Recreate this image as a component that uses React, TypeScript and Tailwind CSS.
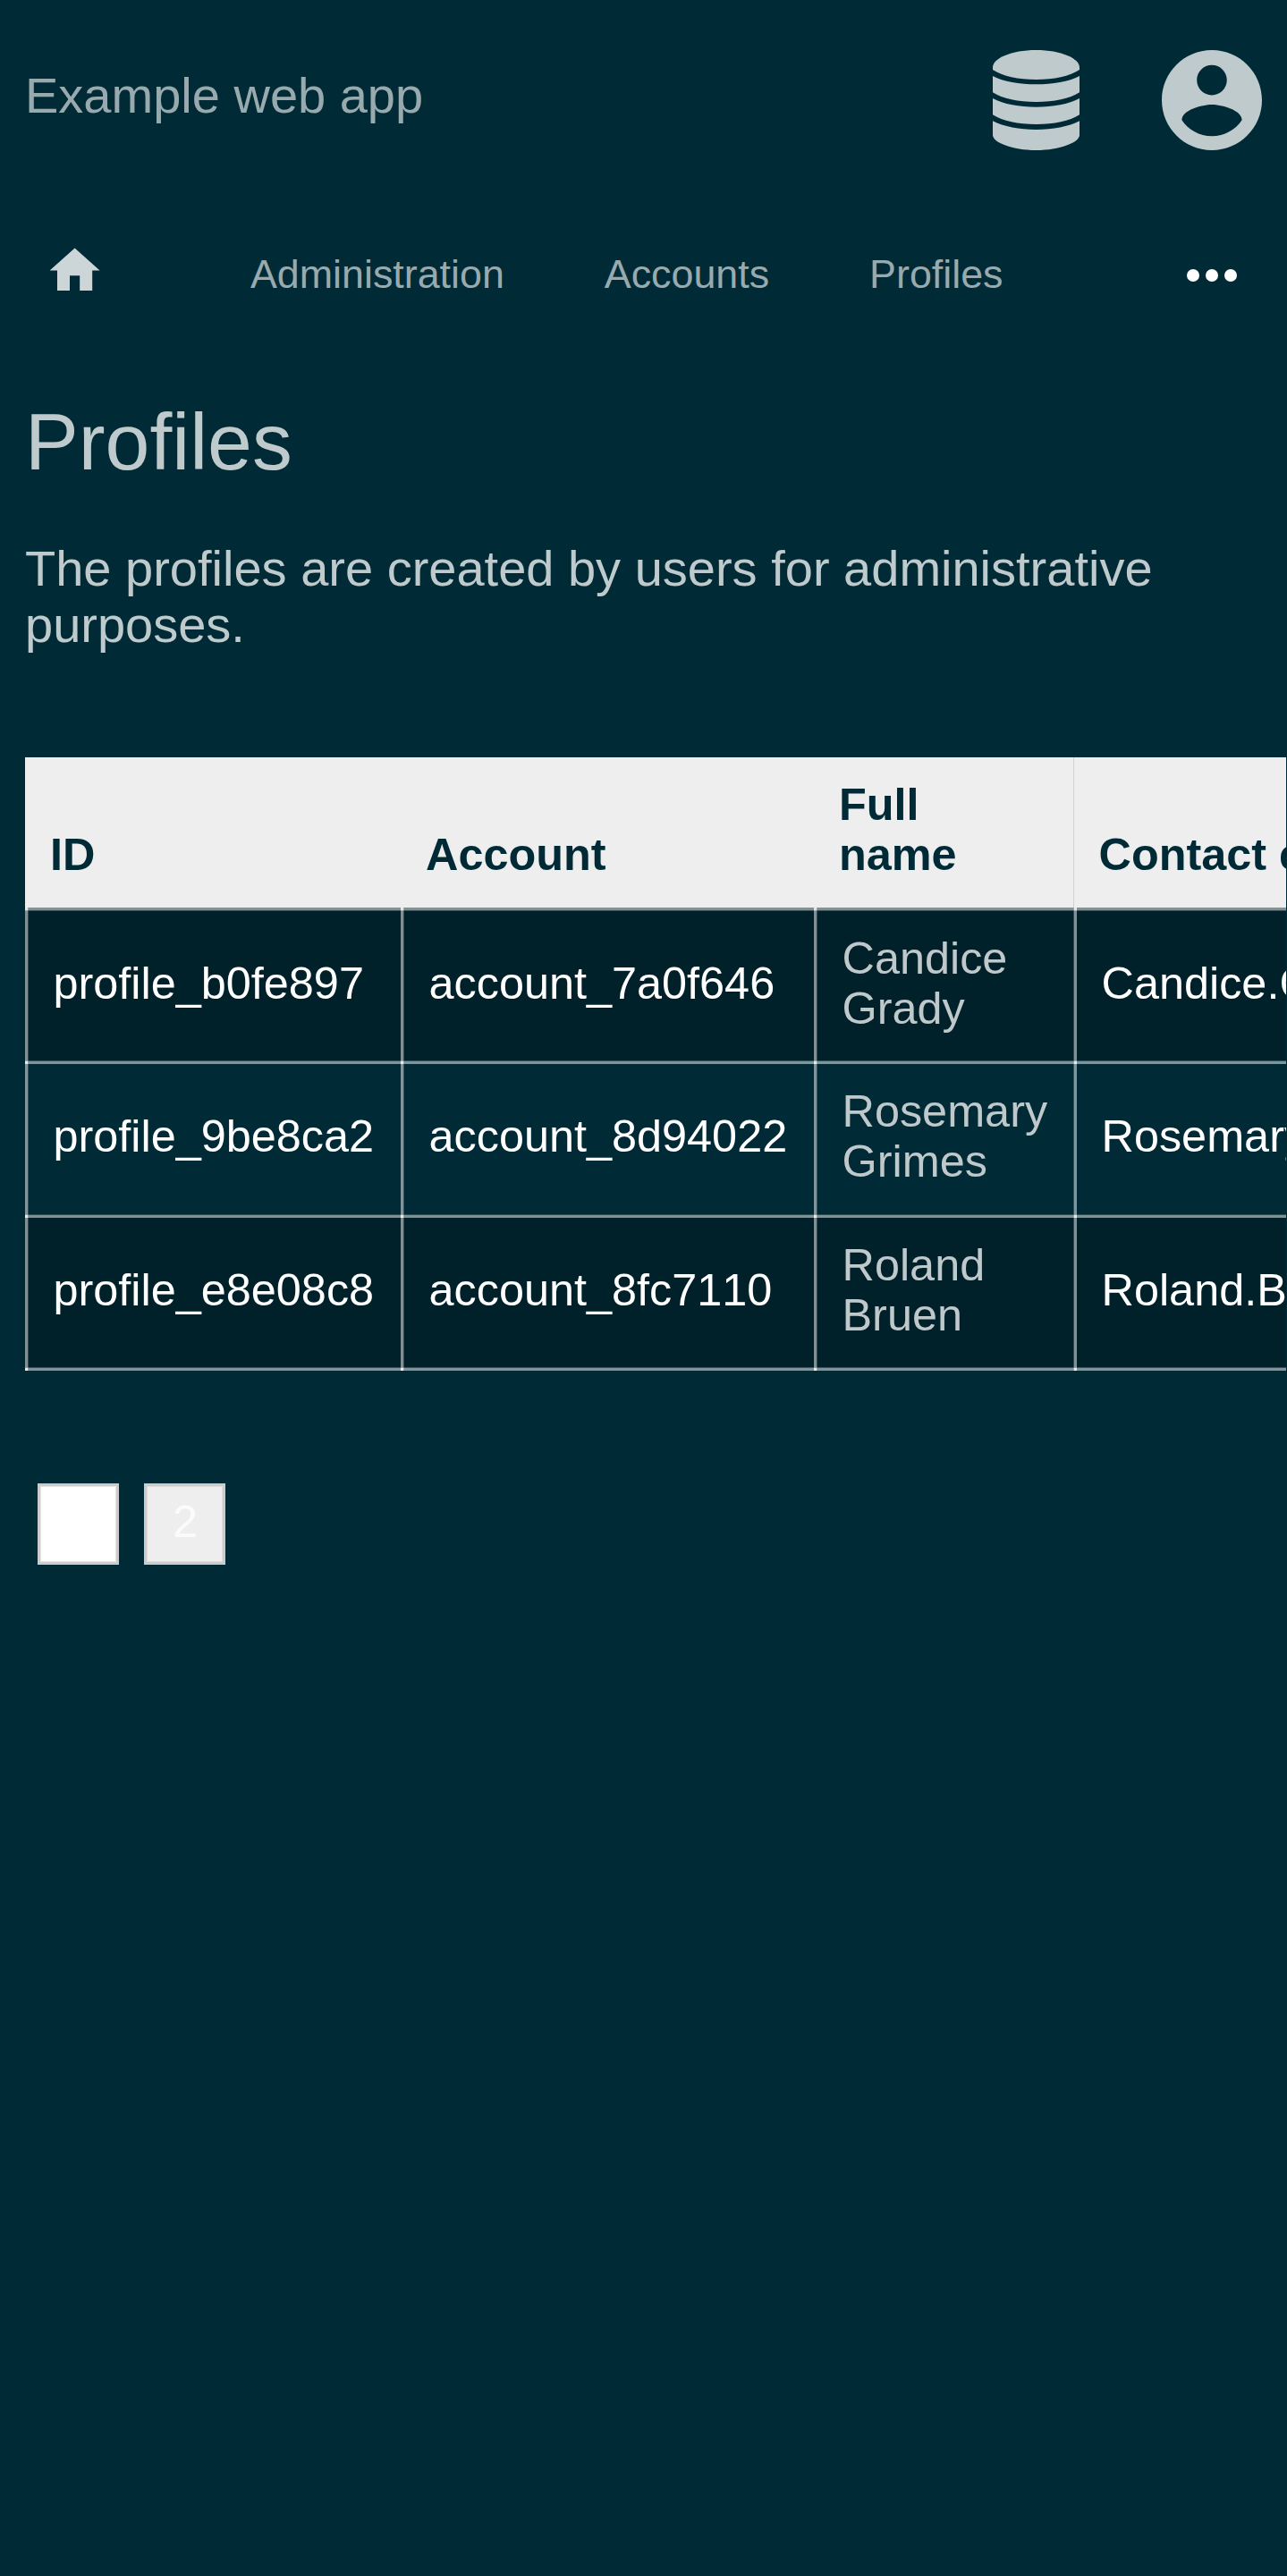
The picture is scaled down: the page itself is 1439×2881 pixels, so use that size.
import React from "react";

const rows = [
  { id: "profile_b0fe897", account: "account_7a0f646", name: ["Candice", "Grady"], email: "Candice.Grady@example.com", tone: "h-[171px] bg-[#00212a]" },
  { id: "profile_9be8ca2", account: "account_8d94022", name: ["Rosemary", "Grimes"], email: "Rosemary.Grimes@example.com", tone: "h-[172px] bg-[#002b36]" },
  { id: "profile_e8e08c8", account: "account_8fc7110", name: ["Roland", "Bruen"], email: "Roland.Bruen@example.com", tone: "h-[171px] bg-[#00212a]" },
];

const columns = "grid grid-cols-[420px_462px_290px_620px]";

function DatabaseIcon() {
  return (
    <svg viewBox="0 0 291 336" className="h-[112px] w-[97px]" fill="currentColor">
      <path d="M0 58C0 28 62 0 145.500 0S291 28 291 58V66C258 88 205 99 145.500 99S33 88 0 66Z" />
      <path d="M0 87C36 106 90 115 145.500 115S255 106 291 87V142C258 164 205 174 145.500 174S33 164 0 142Z" />
      <path d="M0 162C36 182 90 191 145.500 191S255 182 291 162V217C258 239 205 249 145.500 249S33 239 0 217Z" />
      <path d="M0 238C36 257 90 267 145.500 267S255 257 291 238V285C291 310 225 336 145.500 336S0 310 0 285Z" />
    </svg>
  );
}

function AccountIcon() {
  return (
    <svg viewBox="2 2 20 20" className="size-[112px]" fill="currentColor">
      <path d="M12 2C6.480 2 2 6.480 2 12s4.480 10 10 10 10-4.480 10-10S17.520 2 12 2zm0 3c1.660 0 3 1.340 3 3s-1.340 3-3 3-3-1.340-3-3 1.340-3 3-3zm0 14.200c-2.500 0-4.710-1.280-6-3.220.03-1.990 4-3.080 6-3.080 1.990 0 5.970 1.090 6 3.080-1.290 1.940-3.500 3.220-6 3.220z" />
    </svg>
  );
}

function HomeIcon() {
  return (
    <svg viewBox="0 0 24 24" className="mt-[-11.6px] ml-[50.4px] size-[67.2px] text-[#ccd5d7]" fill="currentColor">
      <path d="M10 20v-6h4v6h5v-8h3L12 3 2 12h3v8z" />
    </svg>
  );
}

/* Soft-edged vertical rule at the left edge of a body cell */
function Rule({ first, flip }: { first?: boolean; flip?: boolean }) {
  return (
    <>
      <span className={"absolute top-0 left-0 flex h-full " + (flip ? "flex-row-reverse" : "")}>
        <span className="w-[3px] bg-white/50" />
        <span className="w-px bg-white/20" />
      </span>
      <span className={"absolute size-[3px] bg-white/60 " + (first ? "top-0 " : "top-px ") + (flip ? "left-px" : "left-0")} />
    </>
  );
}

function Line({ first }: { first?: boolean }) {
  return (
    <span className={"absolute top-0 left-0 flex w-full " + (first ? "flex-col-reverse" : "flex-col")}>
      <span className="h-px bg-white/20" />
      <span className="h-[3px] bg-white/50" />
    </span>
  );
}

function Cell({ children, first, flip, color = "text-white" }: { children?: React.ReactNode; first?: boolean; flip?: boolean; color?: string }) {
  return (
    <div className={"relative flex items-center pb-[2px] pl-[31.5px] whitespace-nowrap " + color}>
      <span>{children}</span>
      <Rule first={first} flip={flip} />
    </div>
  );
}

export default function App() {
  return (
    <div className="h-[2881px] w-full overflow-hidden bg-[#002b36] font-['Liberation_Sans',Arial,sans-serif]">
      <header className="flex h-[224px] items-center justify-between pr-[28.5px] pl-[28px] text-[#99aaaf]">
        <h1 className="mt-[-11px] text-[56px] leading-[63px]">Example web app</h1>
        <div className="flex items-center gap-[91.5px] text-[#bfcacd]">
          <DatabaseIcon />
          <AccountIcon />
        </div>
      </header>

      <nav className="flex h-[168px] items-center text-[44.8px] leading-[52px] text-[#99aaaf]">
        <HomeIcon />
        <a className="mt-[-4px] ml-[162.4px]">Administration</a>
        <a className="mt-[-4px] ml-[112px]">Accounts</a>
        <a className="mt-[-4px] ml-[112px]">Profiles</a>
        <span className="mr-[56px] ml-auto flex gap-[7px]">
          <i className="size-[14px] rounded-full bg-white" />
          <i className="size-[14px] rounded-full bg-white" />
          <i className="size-[14px] rounded-full bg-white" />
        </span>
      </nav>

      <main className="text-[#bfcacd]">
        <h2 className="ml-[28px] pt-[52px] text-[89.6px] leading-[100px]">Profiles</h2>
        <p className="mt-[60px] ml-[28px] w-[1383px] text-[56px] leading-[63px]">
          The profiles are created by users for administrative purposes.
        </p>

        <div className="mt-[117px] ml-[28px] w-[1410px] overflow-hidden text-[50.4px] leading-[56px] [font-kerning:none]">
          <div className={columns + " h-[168px] bg-[#eeeeee] font-bold text-[#002b36]"}>
            <div className="flex items-end pb-[31px] pl-[28px]">ID</div>
            <div className="flex items-end pb-[31px] pl-[28px]">Account</div>
            <div className="flex items-end pb-[31px] pl-[28px]"><span>Full<br />name</span></div>
            <div className="flex items-end border-l border-[#d3d3d3] pb-[31px] pl-[27.5px] whitespace-nowrap">Contact email</div>
          </div>
          {rows.map((r, i) => (
            <div key={r.id} className={"relative " + columns + " " + r.tone}>
              <Line first={i === 0} />
              <Cell first={i === 0}>{r.id}</Cell>
              <Cell first={i === 0}>{r.account}</Cell>
              <Cell first={i === 0} color="text-[#bfc8ca]">{r.name[0]}<br />{r.name[1]}</Cell>
              <Cell first={i === 0} flip>{r.email}</Cell>
            </div>
          ))}
          <div className={"relative h-[4px] " + columns}>
            <Line />
            <Cell />
            <Cell />
            <Cell />
            <Cell flip />
          </div>
        </div>

        <div className="mt-[126px] ml-[42px] flex gap-[28px] text-center text-[50.4px] leading-[80px] text-white">
          <a className="h-[91px] w-[91px] border-[3px] border-[#cccccc] bg-white shadow-[inset_0_0_0_1px_#e5e5e5]">1</a>
          <a className="h-[91px] w-[91px] border-[3px] border-[#cccccc] bg-[#eeeeee] pl-px text-[#fbfbfb] shadow-[inset_0_0_0_1px_#dddddd]">2</a>
        </div>
      </main>
    </div>
  );
}
